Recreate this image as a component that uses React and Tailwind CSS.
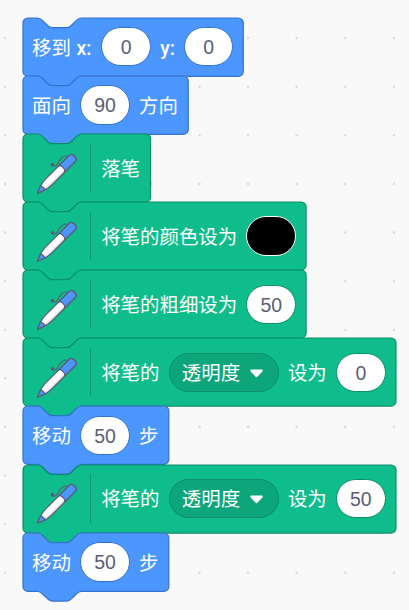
import React from 'react';

const SCALE = 1.215;

const colors = {
  motion: { fill: '#4C97FF', stroke: '#3373CC' },
  pen: { fill: '#0FBD8C', stroke: '#0B8E69' },
};

const blockPath = (w, h) =>
  `M0,4 A4,4 0 0,1 4,0 H12 c2,0 3,1 4,2 l4,4 c1,1 2,2 4,2 h12 c2,0 3,-1 4,-2 l4,-4 c1,-1 2,-2 4,-2 H${w - 4} a4,4 0 0,1 4,4 V${h - 4} a4,4 0 0,1 -4,4 H48 c-2,0 -3,1 -4,2 l-4,4 c-1,1 -2,2 -4,2 h-12 c-2,0 -3,-1 -4,-2 l-4,-4 c-1,-1 -2,-2 -4,-2 H4 a4,4 0 0,1 -4,-4 z`;

const GridDots = () => {
  const dots = [];
  for (let row = 0; row < 13; row++) {
    for (let col = 0; col < 9; col++) {
      dots.push(<circle key={`${row}-${col}`} cx={5.1 + col * 48.6} cy={38.1 + row * 48.6} r="1.3" />);
    }
  }
  return (
    <svg className="absolute inset-0" width="409" height="610" fill="#DDDDDD">
      {dots}
    </svg>
  );
};

const Shape = ({ type, w, h }) => (
  <svg
    className="absolute left-0 top-0 overflow-visible"
    width={w * SCALE}
    height={h * SCALE}
    viewBox={`0 0 ${w} ${h}`}
  >
    <path d={blockPath(w, h)} fill={colors[type].fill} stroke={colors[type].stroke} strokeWidth="1" />
  </svg>
);

const PenIcon = () => (
  <svg className="relative top-[5px] h-[48.6px] w-[48.6px] shrink-0" viewBox="0 0 40 40" fill="none">
    <g stroke="#575E75" strokeLinecap="round" strokeLinejoin="round">
      <path
        d="M8.753 34.602l-4.251 1.779 1.784-4.236c1.218-2.892 2.907-5.423 5.03-7.538L31.066 4.93c.846-.842 2.65-.41 4.032.967 1.38 1.375 1.816 3.173.97 4.015L16.318 29.59c-2.123 2.116-4.664 3.799-7.565 5.012"
        fill="#FFF"
      />
      <path d="M29.41 6.111s-4.45-2.379-8.202 5.771c-1.734 3.766-4.35 1.546-4.35 1.546" />
      <path
        d="M36.42 8.825c0 .463-.14.873-.432 1.164l-9.335 9.301c.282-.29.41-.668.41-1.12 0-.874-.507-1.963-1.406-2.868-1.362-1.358-3.147-1.8-4.002-.99L30.99 5.01c.844-.84 2.65-.41 4.035.96.898.904 1.396 1.982 1.396 2.855M10.515 33.774a23.74 23.74 0 0 1-1.764.83L4.5 36.382l1.786-4.235c.258-.604.529-1.186.833-1.757.69.183 1.449.625 2.109 1.282.659.658 1.102 1.412 1.287 2.102"
        fill="#4C97FF"
      />
    </g>
    <path
      d="M36.498 8.748c0 .464-.141.874-.433 1.165l-19.742 19.68c-2.131 2.111-4.673 3.793-7.572 5.01L4.5 36.381l.974-2.317 1.925-.808c2.899-1.218 5.441-2.899 7.572-5.01l19.742-19.68c.292-.292.432-.702.432-1.165 0-.647-.27-1.4-.779-2.123.249.172.498.377.736.614.898.905 1.396 1.983 1.396 2.856"
      fill="#575E75"
      opacity=".15"
    />
    <circle cx="16.85" cy="12.9" r="1.5" fill="#575E75" />
  </svg>
);

const MotionBlock = ({ w, children }) => (
  <div className="relative h-[58.32px]">
    <Shape type="motion" w={w} h={48} />
    <div className="relative flex h-full items-center gap-[9.72px] px-[9.5px]">{children}</div>
  </div>
);

const PenBlock = ({ w, children }) => (
  <div className="relative h-[68.04px]">
    <Shape type="pen" w={w} h={56} />
    <div className="relative flex h-full items-center gap-[9.72px] px-[9.72px]">
      <PenIcon />
      <div className="-ml-[0.7px] mr-[0.5px] h-[49px] w-px shrink-0 bg-[#0B8E69]/80" />
      {children}
    </div>
  </div>
);

const Label = ({ children, className = '' }) => (
  <span className={`shrink-0 whitespace-pre pt-[3px] ${className}`}>{children}</span>
);

const NumberInput = ({ value, pen }) => (
  <div
    className={`flex h-[39.4px] w-[49.8px] -mx-[0.6px] shrink-0 items-center justify-center rounded-full border-[1.2px] bg-white pt-[2px] text-[#575E75] ${pen ? 'border-[#0B8E69]' : 'border-[#3373CC]'}`}
  >
    {value}
  </div>
);

const Dropdown = ({ label }) => (
  <div className="flex h-[39.4px] w-[110.2px] -mx-[0.6px] shrink-0 items-center rounded-full border border-[#0B8E69] bg-[#0DA57A] pl-[12.2px]">
    <span className="pt-[3px]">{label}</span>
    <svg className="ml-[10.1px] mt-0.5" width="13" height="9" viewBox="0 0 13 9" fill="#FFF">
      <path d="M1.6,0.5 H11.4 C12.8,0.5 13,1.8 12.2,2.7 L7.6,7.6 C6.9,8.3 6.1,8.3 5.4,7.6 L0.8,2.7 C0,1.8 0.2,0.5 1.6,0.5 Z" />
    </svg>
  </div>
);

const App = () => {
  return (
    <div
      className="relative h-[610px] w-[409px] overflow-hidden bg-[#F9F9F9] pl-[22.6px] pt-[17.6px] text-[19.44px] leading-none text-white"
      style={{ fontFamily: '"Liberation Sans", "Noto Sans CJK SC", sans-serif' }}
    >
      <GridDots />
      <MotionBlock w={181.3}>
        <Label className="w-[60px]">移到 <span className="font-['Roboto'] font-medium">x:</span></Label>
        <NumberInput value="0" />
        <Label className="w-[14.4px] font-['Roboto'] font-medium">y:</Label>
        <NumberInput value="0" />
      </MotionBlock>
      <MotionBlock w={136}>
        <Label>面向</Label>
        <NumberInput value="90" />
        <Label>方向</Label>
      </MotionBlock>
      <PenBlock w={105}>
        <Label>落笔</Label>
      </PenBlock>
      <PenBlock w={233}>
        <Label>将笔的颜色设为</Label>
        <div className="-mx-[0.6px] h-[40px] w-[49.8px] shrink-0 rounded-full border-[1.2px] border-white bg-black" />
      </PenBlock>
      <PenBlock w={233}>
        <Label>将笔的粗细设为</Label>
        <NumberInput value="50" pen />
      </PenBlock>
      <PenBlock w={307}>
        <Label>将笔的</Label>
        <Dropdown label="透明度" />
        <Label>设为</Label>
        <NumberInput value="0" pen />
      </PenBlock>
      <MotionBlock w={120}>
        <Label>移动</Label>
        <NumberInput value="50" />
        <Label>步</Label>
      </MotionBlock>
      <PenBlock w={307}>
        <Label>将笔的</Label>
        <Dropdown label="透明度" />
        <Label>设为</Label>
        <NumberInput value="50" pen />
      </PenBlock>
      <MotionBlock w={120}>
        <Label>移动</Label>
        <NumberInput value="50" />
        <Label>步</Label>
      </MotionBlock>
    </div>
  );
};

export default App;
